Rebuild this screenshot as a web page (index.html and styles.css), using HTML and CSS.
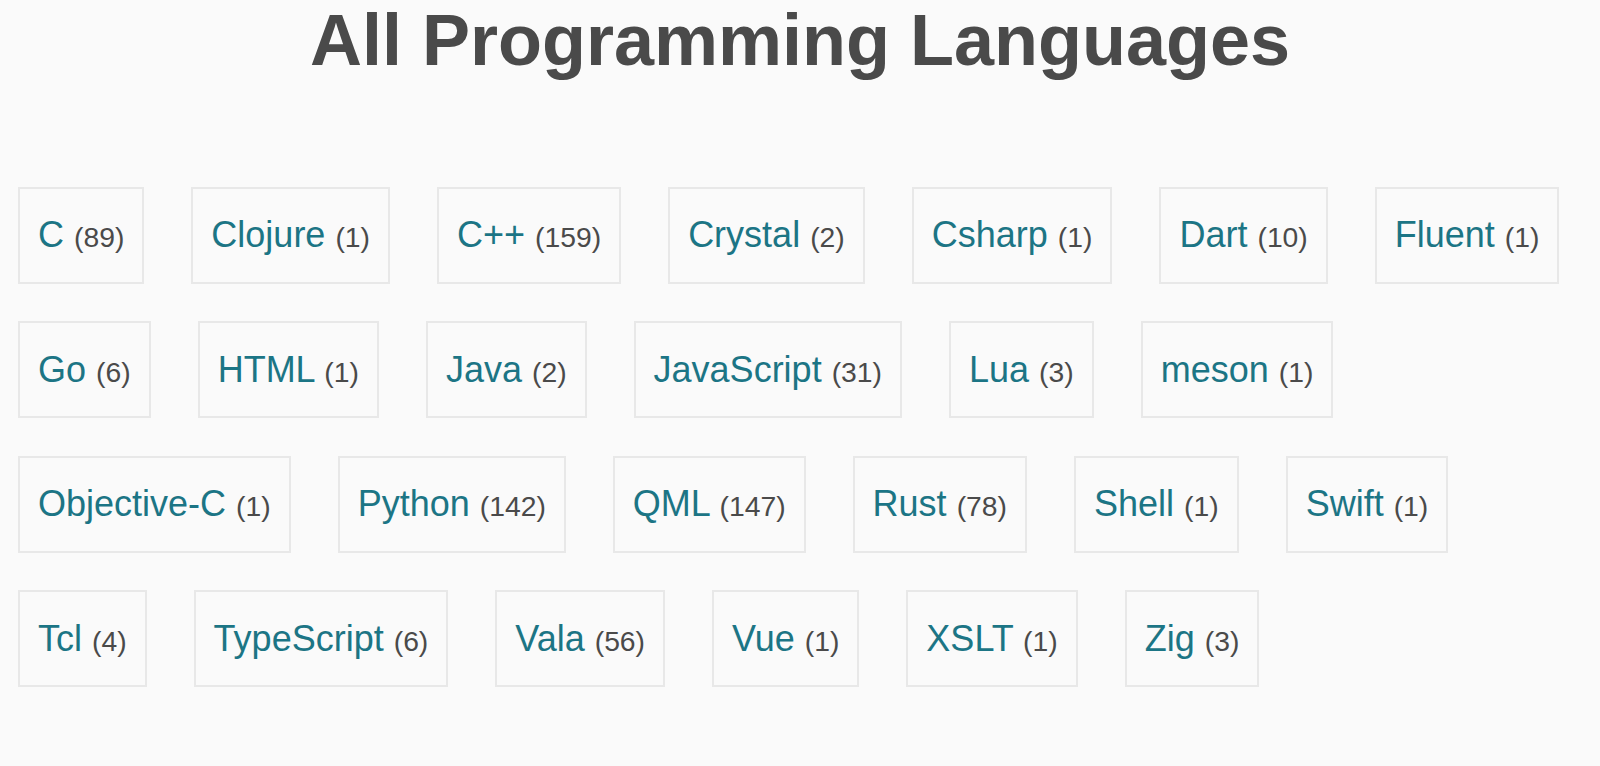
FILE: index.html
```html
<!DOCTYPE html>
<html lang="en">
<head>
<meta charset="utf-8">
<title>All Programming Languages</title>
<link rel="stylesheet" href="styles.css">
</head>
<body>
<h1 class="title">All Programming Languages</h1>
<ul class="langs">
  <li class="lang"><a class="lang-name" href="#">C</a> <span class="lang-count">(89)</span></li>
  <li class="lang"><a class="lang-name" href="#">Clojure</a> <span class="lang-count">(1)</span></li>
  <li class="lang"><a class="lang-name" href="#">C++</a> <span class="lang-count">(159)</span></li>
  <li class="lang"><a class="lang-name" href="#">Crystal</a> <span class="lang-count">(2)</span></li>
  <li class="lang"><a class="lang-name" href="#">Csharp</a> <span class="lang-count">(1)</span></li>
  <li class="lang"><a class="lang-name" href="#">Dart</a> <span class="lang-count">(10)</span></li>
  <li class="lang"><a class="lang-name" href="#">Fluent</a> <span class="lang-count">(1)</span></li>
  <li class="lang"><a class="lang-name" href="#">Go</a> <span class="lang-count">(6)</span></li>
  <li class="lang"><a class="lang-name" href="#">HTML</a> <span class="lang-count">(1)</span></li>
  <li class="lang"><a class="lang-name" href="#">Java</a> <span class="lang-count">(2)</span></li>
  <li class="lang"><a class="lang-name" href="#">JavaScript</a> <span class="lang-count">(31)</span></li>
  <li class="lang"><a class="lang-name" href="#">Lua</a> <span class="lang-count">(3)</span></li>
  <li class="lang"><a class="lang-name" href="#">meson</a> <span class="lang-count">(1)</span></li>
  <li class="lang"><a class="lang-name" href="#">Objective-C</a> <span class="lang-count">(1)</span></li>
  <li class="lang"><a class="lang-name" href="#">Python</a> <span class="lang-count">(142)</span></li>
  <li class="lang"><a class="lang-name" href="#">QML</a> <span class="lang-count">(147)</span></li>
  <li class="lang"><a class="lang-name" href="#">Rust</a> <span class="lang-count">(78)</span></li>
  <li class="lang"><a class="lang-name" href="#">Shell</a> <span class="lang-count">(1)</span></li>
  <li class="lang"><a class="lang-name" href="#">Swift</a> <span class="lang-count">(1)</span></li>
  <li class="lang"><a class="lang-name" href="#">Tcl</a> <span class="lang-count">(4)</span></li>
  <li class="lang"><a class="lang-name" href="#">TypeScript</a> <span class="lang-count">(6)</span></li>
  <li class="lang"><a class="lang-name" href="#">Vala</a> <span class="lang-count">(56)</span></li>
  <li class="lang"><a class="lang-name" href="#">Vue</a> <span class="lang-count">(1)</span></li>
  <li class="lang"><a class="lang-name" href="#">XSLT</a> <span class="lang-count">(1)</span></li>
  <li class="lang"><a class="lang-name" href="#">Zig</a> <span class="lang-count">(3)</span></li>
</ul>
</body>
</html>
```

FILE: styles.css
```css
html, body {
  margin: 0;
  padding: 0;
  background: #fafafa;
  font-family: "Liberation Sans", Arial, sans-serif;
  color: #4a4a4a;
}

.title {
  margin: 0;
  font-size: 72px;
  font-weight: bold;
  line-height: normal;
  text-align: center;
  color: #4a4a4a;
  margin-top: -1px;
}

.langs {
  list-style: none;
  margin: 0;
  padding: 105.5px 18px 0 18px;
  display: flex;
  flex-wrap: wrap;
  column-gap: 47px;
  row-gap: 37.5px;
}

.lang {
  border: 2px solid #e8e8e8;
  padding: 25.5px 18px;
  font-size: 36px;
  line-height: 42px;
  white-space: nowrap;
}

.lang-name {
  color: #1c7585;
  text-decoration: none;
}

.lang-count {
  font-size: 28.3px;
  line-height: 1;
  color: #4a4a4a;
}
```
